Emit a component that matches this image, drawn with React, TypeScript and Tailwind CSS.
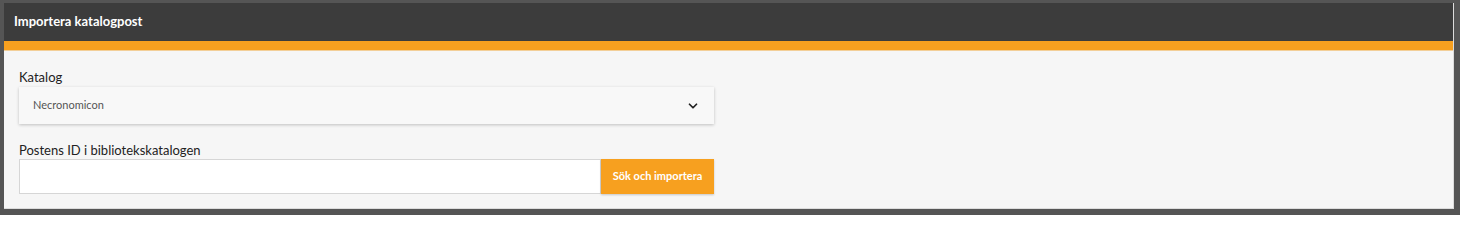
import { ChevronDown } from "lucide-react";

const font = { fontFamily: "Lato, 'Liberation Sans', sans-serif" };

export default function App() {
  return (
    <div className="h-[215px] w-[1460px] bg-[#555555] pl-[4px] pr-[6px] pt-[3px] pb-[6px]" style={font}>
      <div className="flex h-full flex-col border-b border-r border-[#dcdcdc] bg-[#f6f6f6]">
        <div className="flex h-[38px] items-center bg-[#3c3c3c] px-[10px]">
          <h1 className="text-[13px] font-bold text-white">Importera katalogpost</h1>
        </div>
        <div className="h-[10px] border-b border-[#f3cf98] bg-[#f7a01f]" />
        <div className="flex flex-col px-[15px] pt-[18px]">
          <label className="text-[13px] leading-[17px] text-[#222]">Katalog</label>
          <div className="mt-[1px] flex h-[37px] w-[695px] items-center justify-between bg-[#f8f8f8] pl-[14px] pr-[14px] shadow-[0_1px_3px_rgba(0,0,0,0.22)]">
            <span className="text-[11px] text-[#555]">Necronomicon</span>
            <ChevronDown className="h-[14px] w-[14px] text-[#222]" strokeWidth={3} />
          </div>
          <label className="mt-[18px] text-[13px] leading-[17px] text-[#222]">Postens ID i bibliotekskatalogen</label>
          <div className="flex h-[35px] w-[695px]">
            <input className="h-full flex-1 border border-[#d6d6d6] bg-white px-2 text-[13px] outline-none" />
            <button className="h-full w-[113px] bg-[#f7a01f] text-[11px] font-bold text-white shadow-[0_1px_2px_rgba(0,0,0,0.2)]">
              Sök och importera
            </button>
          </div>
        </div>
      </div>
    </div>
  );
}
